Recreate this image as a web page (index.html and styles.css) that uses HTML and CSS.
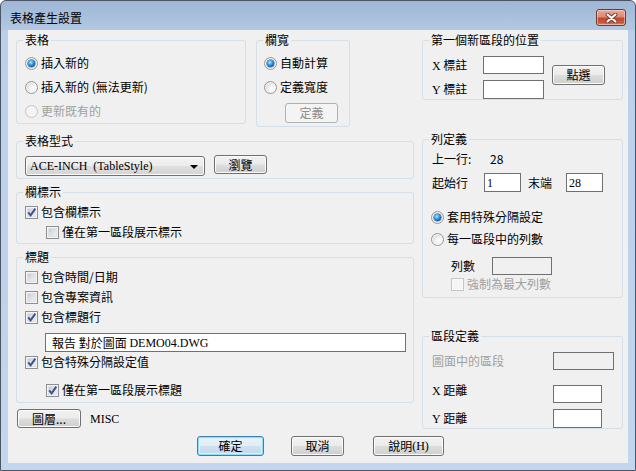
FILE: index.html
```html
<!DOCTYPE html>
<html lang="zh-Hant">
<head>
<meta charset="utf-8">
<title>表格產生設置</title>
<link rel="stylesheet" href="styles.css">
</head>
<body>
<div class="window">
  <div class="titlebar">
    <span class="title">表格產生設置</span>
    <span class="close" aria-label="關閉">
      <svg width="13" height="10" viewBox="0 0 13 10"><path d="M2.5 1.5L10.5 8.5M10.5 1.5L2.5 8.5" stroke="#6b3a30" stroke-width="3.8" stroke-linecap="round"/><path d="M2.5 1.5L10.5 8.5M10.5 1.5L2.5 8.5" stroke="#ffffff" stroke-width="2.1" stroke-linecap="round"/></svg>
    </span>
  </div>
  <div class="client">
    <div class="cols">
      <div class="col-left">
        <div class="row-top">
          <fieldset class="grp g-table">
            <legend>表格</legend>
            <div class="gb gb-table">
              <div class="opt r24"><span class="radio on"></span><span>插入新的</span></div>
              <div class="opt r24"><span class="radio"></span><span>插入新的 (無法更新)</span></div>
              <div class="opt r24 dis"><span class="radio off"></span><span>更新既有的</span></div>
            </div>
          </fieldset>
          <fieldset class="grp g-colw">
            <legend>欄寬</legend>
            <div class="gb gb-colw">
              <div class="opt r24"><span class="radio on"></span><span>自動計算</span></div>
              <div class="opt r24"><span class="radio"></span><span>定義寬度</span></div>
              <span class="btn btn-dis btn-define">定義</span>
            </div>
          </fieldset>
        </div>

        <fieldset class="grp g-style">
          <legend>表格型式</legend>
          <div class="gb gb-style">
            <div class="combo"><span class="ser">ACE-INCH&nbsp; (TableStyle)</span><span class="arrow"></span></div>
            <span class="btn btn-browse">瀏覽</span>
          </div>
        </fieldset>

        <fieldset class="grp g-colhdr">
          <legend>欄標示</legend>
          <div class="gb gb-colhdr">
            <div class="opt r20"><span class="check on"><svg viewBox="0 0 13 13" width="13" height="13"><path d="M3.2 6.4L5.6 9.3L10.3 2.6" fill="none" stroke="#3a5494" stroke-width="2"/></svg></span><span>包含欄標示</span></div>
            <div class="opt r20 ind"><span class="check"></span><span>僅在第一區段展示標示</span></div>
          </div>
        </fieldset>

        <fieldset class="grp g-title">
          <legend>標題</legend>
          <div class="gb gb-title">
            <div class="opt r20"><span class="check"></span><span>包含時間/日期</span></div>
            <div class="opt r20"><span class="check"></span><span>包含專案資訊</span></div>
            <div class="opt r20"><span class="check on"><svg viewBox="0 0 13 13" width="13" height="13"><path d="M3.2 6.4L5.6 9.3L10.3 2.6" fill="none" stroke="#3a5494" stroke-width="2"/></svg></span><span>包含標題行</span></div>
            <div class="edit edit-title">報告 對於圖面&nbsp;<span class="ser">DEMO04.DWG</span></div>
            <div class="opt r20"><span class="check on"><svg viewBox="0 0 13 13" width="13" height="13"><path d="M3.2 6.4L5.6 9.3L10.3 2.6" fill="none" stroke="#3a5494" stroke-width="2"/></svg></span><span>包含特殊分隔設定值</span></div>
            <div class="opt r20 ind last"><span class="check on"><svg viewBox="0 0 13 13" width="13" height="13"><path d="M3.2 6.4L5.6 9.3L10.3 2.6" fill="none" stroke="#3a5494" stroke-width="2"/></svg></span><span>僅在第一區段展示標題</span></div>
          </div>
        </fieldset>

        <div class="layer-row">
          <span class="btn btn-layer">圖層...</span>
          <span class="ser misc">MISC</span>
        </div>
      </div>

      <div class="col-right">
        <fieldset class="grp g-pos">
          <legend>第一個新區段的位置</legend>
          <div class="gb gb-pos">
            <div class="pos-fields">
              <div class="frow h18"><span class="lab w51"><span class="ser">X</span> 標註</span><span class="edit w61 h18"></span></div>
              <div class="frow h19"><span class="lab w51"><span class="ser">Y</span> 標註</span><span class="edit w61 h19"></span></div>
            </div>
            <span class="btn btn-pick">點選</span>
          </div>
        </fieldset>

        <fieldset class="grp g-rows">
          <legend>列定義</legend>
          <div class="gb gb-rows">
            <div class="frow h18"><span class="lab w58">上一行:</span><span>28</span></div>
            <div class="frow h19 mt5"><span class="lab w52">起始行</span><span class="edit w37 h19 ser">1</span><span class="lab w38 ml7">末端</span><span class="edit w37 h19 ser">28</span></div>
            <div class="opt r20 mt15 nudge"><span class="radio on"></span><span>套用特殊分隔設定</span></div>
            <div class="opt r20 mt2 nudge"><span class="radio"></span><span>每一區段中的列數</span></div>
            <div class="frow h18 mt8 in19"><span class="lab w41">列數</span><span class="edit w60 h18 edit-dis"></span></div>
            <div class="opt r14 mt2 in19 dis"><span class="check off"></span><span>強制為最大列數</span></div>
          </div>
        </fieldset>

        <fieldset class="grp g-sect">
          <legend>區段定義</legend>
          <div class="gb gb-sect">
            <div class="frow h18 dis"><span class="lab w121">圖面中的區段</span><span class="edit w61 h18 edit-dis"></span></div>
            <div class="frow h18 mt15 top"><span class="lab w121 tight"><span class="ser">X</span> 距離</span><span class="edit w49 h18"></span></div>
            <div class="frow h19 mt6"><span class="lab w121"><span class="ser">Y</span> 距離</span><span class="edit w49 h19"></span></div>
          </div>
        </fieldset>
      </div>
    </div>

    <div class="actions">
      <span class="btn btn-default btn-ok">確定</span>
      <span class="btn btn-cancel">取消</span>
      <span class="btn btn-help">說明<span class="ser">(H)</span></span>
    </div>
  </div>
</div>
</body>
</html>
```

FILE: styles.css
```css
* { box-sizing: border-box; }
html, body { margin: 0; padding: 0; }
body {
  width: 636px;
  height: 471px;
  overflow: hidden;
  background: #ffffff;
  color: #000;
  font-family: "Noto Sans CJK TC", "Noto Sans", sans-serif;
  font-size: 12px;
  line-height: 14px;
}
.ser { font-family: "Liberation Serif", "Noto Sans CJK TC", serif; }

/* window frame */
.window {
  width: 636px;
  height: 471px;
  border: 1px solid #4b5565;
  border-radius: 6px 6px 0 0;
  background: linear-gradient(to bottom, #9fb7d5 0px, #b2c8e2 29px, #bad0e9 30px, #c2d6ed 100%);
  padding: 0 7px 7px 7px;
  display: flex;
  flex-direction: column;
}
.titlebar {
  height: 29px;
  flex: none;
  display: flex;
  justify-content: space-between;
  align-items: flex-start;
}
.title { margin: 10px 0 0 2px; color: #000; }
.close {
  margin: 8px 2px 0 0;
  width: 30px;
  height: 17px;
  border: 1px solid #6e3b33;
  border-radius: 3px;
  background: linear-gradient(to bottom, #e9a99a 0%, #dc8a75 45%, #c4472c 55%, #c95a3f 85%, #d98a6f 100%);
  box-shadow: inset 0 0 0 1px rgba(255, 220, 210, 0.55);
  display: flex;
  align-items: center;
  justify-content: center;
}
.close svg { display: block; }

.client {
  flex: 1;
  background: #f0f0f0;
  padding: 3px 0 0 8px;
  display: flex;
  flex-direction: column;
}
.cols { display: flex; align-items: flex-start; gap: 8px; }
.col-left { width: 398px; display: flex; flex-direction: column; }
.col-right { width: 201px; display: flex; flex-direction: column; }

/* group boxes */
.grp {
  margin: 0;
  padding: 0;
  min-width: 0;
  border: 1px solid #d5dfe5;
  border-radius: 3px;
}
.grp legend {
  margin-left: 6px;
  padding: 0 2px;
  line-height: 14px;
}
.gb { display: flex; flex-direction: column; align-items: flex-start; }

.row-top { display: flex; align-items: flex-start; gap: 10px; }
.g-table { width: 230px; height: 91px; }
.g-colw { width: 94px; height: 94px; }
.g-style { width: 398px; height: 45px; margin-top: 7px; }
.g-colhdr { width: 398px; height: 59px; margin-top: 6px; }
.g-title { width: 398px; height: 153px; margin-top: 6px; }
.g-pos { width: 201px; height: 67px; }
.g-rows { width: 201px; height: 166px; margin-top: 32px; }
.g-sect { width: 201px; height: 100px; margin-top: 31px; }

.gb-table { padding: 4px 0 0 8px; }
.gb-colw { padding: 4px 0 0 7px; }
.gb-style { padding: 7px 0 0 8px; flex-direction: row; }
.gb-colhdr { padding: 3px 0 0 8px; }
.gb-title { padding: 3px 0 0 8px; }
.gb-pos { padding: 9px 0 0 9px; flex-direction: row; }
.gb-rows { padding: 4px 0 0 9px; }
.gb-sect { padding: 9px 0 0 9px; }

/* option rows */
.opt { display: flex; align-items: center; gap: 3px; white-space: nowrap; }
.r24 { height: 24px; }
.r20 { height: 20px; }
.r14 { height: 14px; }
.ind { margin-left: 21px; }
.last { margin-top: 8px; }
.nudge { margin-left: -1px; }
.in19 { margin-left: 19px; }
.dis { color: #a0a0a0; }

.radio {
  width: 13px;
  height: 13px;
  flex: none;
  border-radius: 50%;
  border: 1px solid #979797;
  background: radial-gradient(circle at 65% 65%, #ffffff 0%, #f2f2f2 35%, #d9d9d9 75%, #cccccc 100%);
  box-shadow: inset 0 0 0 1px #f7f7f7;
  display: grid;
  place-items: center;
}
.radio.on::after {
  content: "";
  width: 7px;
  height: 7px;
  border-radius: 50%;
  background: radial-gradient(circle at 40% 35%, #b8ecff 0%, #3ea6ec 35%, #0f5bb0 70%, #0b3d7a 100%);
  box-shadow: 0 0 0 0.5px #1d4f8a;
}
.radio.off { border-color: #c6c6c6; background: #f4f4f4; box-shadow: none; }

.check {
  width: 13px;
  height: 13px;
  flex: none;
  border: 1px solid #8e8f8f;
  background: linear-gradient(135deg, #b6bbc2 0%, #dcdfe3 45%, #f4f4f5 100%);
  box-shadow: inset 0 0 0 1px #f4f4f4, inset 0 0 0 2px #dee2e7;
  display: block;
  overflow: visible;
}
.check svg { display: block; margin: -1px 0 0 -1px; overflow: visible; }
.check.off { border-color: #c5c5c5; background: #f5f5f5; box-shadow: inset 0 0 0 1px #fbfbfb; }

/* buttons */
.btn {
  display: inline-flex;
  align-items: center;
  justify-content: center;
  flex: none;
  height: 20px;
  border: 1px solid #707070;
  border-radius: 3px;
  background: linear-gradient(to bottom, #f2f2f2 0%, #ebebeb 48%, #dddddd 52%, #cfcfcf 100%);
  box-shadow: inset 0 0 0 1px #fbfbfb;
  white-space: nowrap;
}
.btn-dis {
  border-color: #adb2b5;
  background: #f4f4f4;
  box-shadow: none;
  color: #8d8d8d;
}
.btn-define { width: 53px; margin: 4px 0 0 21px; }
.btn-browse { width: 53px; height: 19px; margin-left: 9px; }
.btn-pick { width: 53px; margin: 9px 0 0 8px; }
.btn-layer { width: 64px; height: 19px; margin-left: 1px; }
.btn-default {
  border-color: #3c7fb1;
  background: linear-gradient(to bottom, #eaf4fb 0%, #e0edf7 48%, #cfe1ef 52%, #c3d8ea 100%);
  box-shadow: inset 0 0 0 1px #8fdcf8, inset 0 0 0 2px #d9f1fc;
}

/* combo */
.combo {
  width: 180px;
  height: 20px;
  margin-top: 1px;
  border: 1px solid #707070;
  border-radius: 3px;
  background: linear-gradient(to bottom, #f4f4f4 0%, #ececec 48%, #dfdfdf 52%, #d4d4d4 100%);
  box-shadow: inset 0 0 0 1px #fcfcfc;
  display: flex;
  align-items: center;
  justify-content: space-between;
  padding: 0 6px 0 4px;
  white-space: nowrap;
}
.arrow {
  width: 0;
  height: 0;
  border-left: 4px solid transparent;
  border-right: 4px solid transparent;
  border-top: 4px solid #000;
  margin-top: 2px;
}

/* edits */
.edit {
  display: flex;
  align-items: center;
  flex: none;
  background: #ffffff;
  border: 1px solid #707070;
  padding: 0 2px;
  white-space: nowrap;
}
.edit-dis { background: #f0f0f0; }
.edit-title { width: 361px; height: 19px; margin: 6px 0 0 20px; padding-left: 6px; }
.w61 { width: 61px; }
.w60 { width: 60px; }
.w49 { width: 49px; }
.w37 { width: 37px; }
.h18 { height: 18px; }
.h19 { height: 19px; }

.frow { display: flex; align-items: center; white-space: nowrap; }
.frow.top { align-items: flex-start; }
.lab { flex: none; }
.tight { line-height: 10px; }
.w51 { width: 51px; }
.w52 { width: 52px; }
.w58 { width: 58px; }
.w38 { width: 38px; }
.w41 { width: 41px; }
.w121 { width: 121px; }
.ml7 { margin-left: 7px; }
.mt2 { margin-top: 2px; }
.mt5 { margin-top: 5px; }
.mt6 { margin-top: 6px; }
.mt8 { margin-top: 8px; }
.mt15 { margin-top: 15px; }

.pos-fields { display: flex; flex-direction: column; gap: 6px; }

.layer-row { display: flex; align-items: center; height: 19px; margin-top: 6px; }
.misc { margin-left: 9px; }

/* bottom buttons */
.actions { display: flex; margin-top: 7px; }
.btn-ok { width: 67px; margin-left: 181px; }
.btn-cancel { width: 53px; margin-left: 27px; }
.btn-help { width: 71px; margin-left: 29px; }
```
